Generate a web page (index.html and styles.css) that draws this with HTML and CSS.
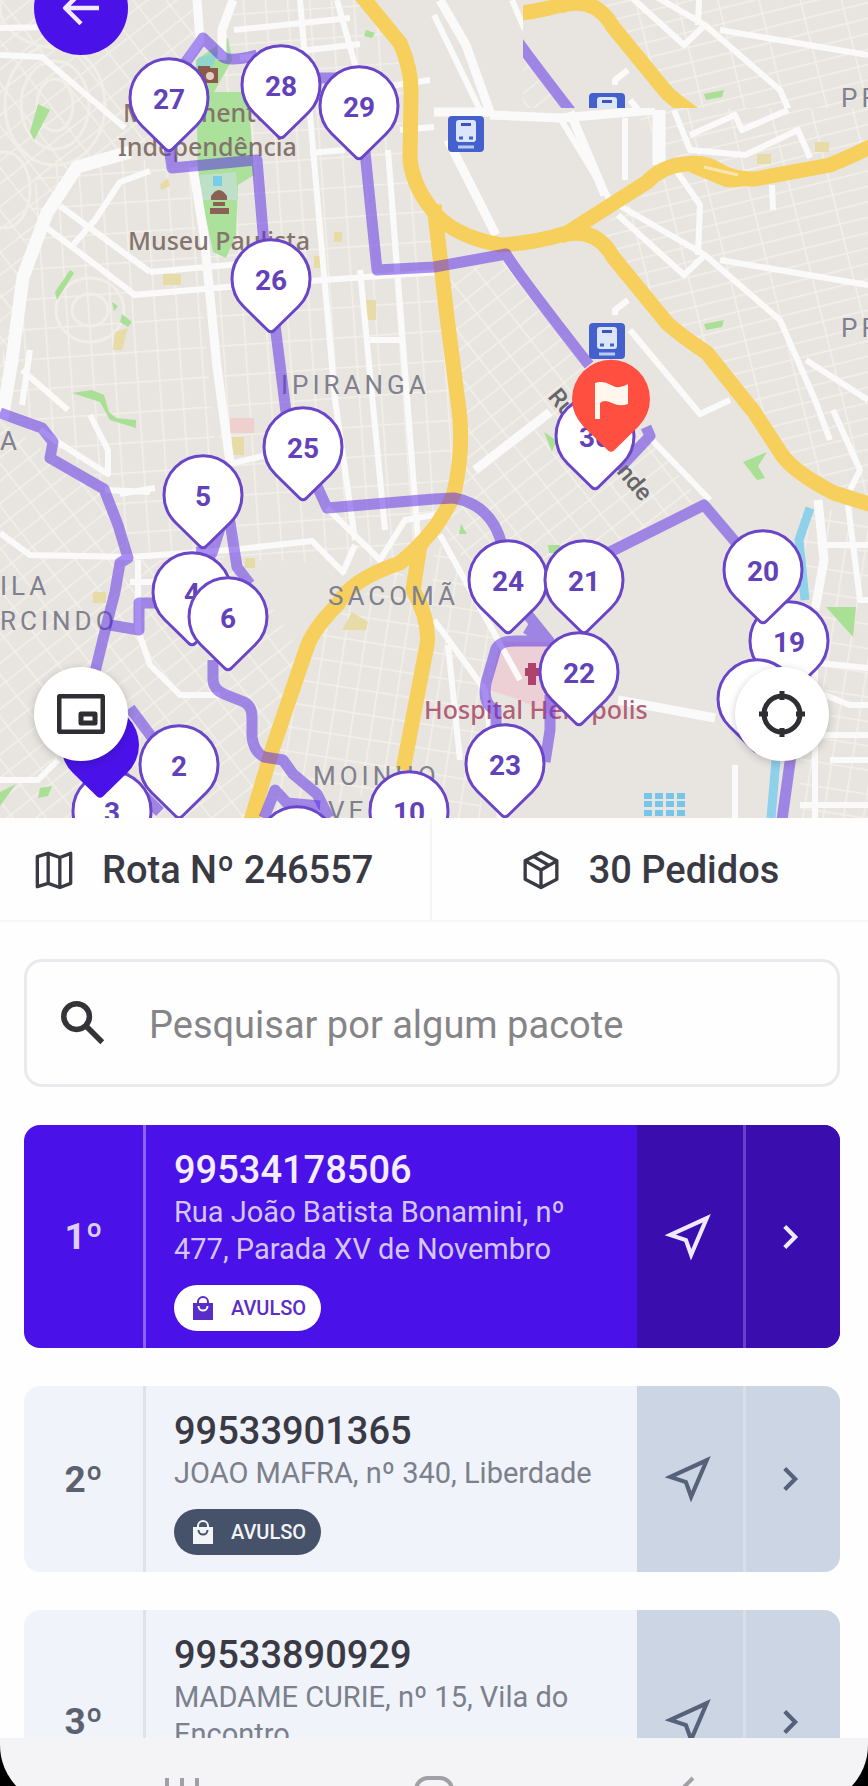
FILE: index.html
```html
<!DOCTYPE html>
<html lang="pt-BR">
<head>
<meta charset="utf-8">
<meta name="viewport" content="width=device-width, initial-scale=1">
<title>Rota Nº 246557</title>
<link rel="stylesheet" href="styles.css">
</head>
<body>
<div class="screen">
  <section class="map" aria-label="Mapa da rota">
    <svg class="map-canvas" viewBox="0 0 868 818" role="img" aria-label="Rota com 30 paradas">
      <defs>
        <pattern id="grid-a" width="22" height="30" patternUnits="userSpaceOnUse" patternTransform="rotate(-4)"><path d="M0 0H22M0 0V30" class="lane"/></pattern>
        <pattern id="grid-b" width="26" height="18" patternUnits="userSpaceOnUse" patternTransform="rotate(-38)"><path d="M0 0H26M0 0V18" class="lane"/></pattern>
        <pattern id="grid-c" width="40" height="15" patternUnits="userSpaceOnUse" patternTransform="rotate(-14)"><path d="M0 0H40M0 0V15" class="lane"/></pattern>
        <pattern id="grid-d" width="20" height="24" patternUnits="userSpaceOnUse" patternTransform="rotate(9)"><path d="M0 0H20M0 0V24" class="lane"/></pattern>
        <path id="pin" d="M-27.5 27.5A39 39 0 1 1 27.5 27.5L3 51.5Q0 54 -3 51.5Z"/>
        <clipPath id="tile"><rect x="523" y="0" width="345" height="108"/></clipPath>
        <g id="station"><rect x="-18" y="-18" width="36" height="36" rx="4" fill="#4460cc"/><rect x="-10" y="-14" width="20" height="22" rx="3" fill="#dbe6fb"/><rect x="-5" y="-11" width="10" height="3" fill="#3d55bb"/><path d="M-7 4h4M3 4h4" stroke="#4460cc" stroke-width="3"/><path d="M-8 13H8" stroke="#b9cbf5" stroke-width="3"/></g>
      </defs>

      <g id="base">
        <rect width="868" height="818" fill="#e8e5e0"/>
        <path d="M230 0H362L410 80V170L441 230L461 410L454 493L400 563L230 560L200 200Z" fill="url(#grid-a)"/>
        <path d="M40 160L190 160L225 560L130 560L100 480L0 410V370Z" fill="url(#grid-a)"/>
        <path d="M0 0H195V150L110 150L50 200L0 400Z" fill="url(#grid-b)"/>
        <path d="M0 420L100 490L130 560L240 560L300 650L250 818H0Z" fill="url(#grid-b)"/>
        <path d="M310 640L400 565L428 640L403 780L300 818H256Z" fill="url(#grid-d)"/>
        <path d="M447 270L510 262L600 380L700 500L500 600L440 530L462 450Z" fill="url(#grid-b)"/>
        <path d="M590 235L690 160L868 170V500L790 460L667 320Z" fill="url(#grid-c)"/>
        <path d="M620 0H868V150L730 175L680 160L640 120Z" fill="url(#grid-c)"/>
        <path d="M800 510H868V818H800Z" fill="url(#grid-d)"/>
        <path d="M434 540L500 600L480 818H405L430 640Z" fill="url(#grid-d)"/>
        <g class="rings">
          <ellipse cx="55" cy="105" rx="18" ry="26"/><ellipse cx="55" cy="105" rx="34" ry="44"/><ellipse cx="55" cy="105" rx="50" ry="60"/>
          <ellipse cx="90" cy="310" rx="18" ry="16"/><ellipse cx="90" cy="310" rx="34" ry="32"/><ellipse cx="60" cy="8" rx="60" ry="40"/><ellipse cx="5" cy="190" rx="25" ry="38"/>
        </g>

        <path d="M196 60L228 38L232 60L214 92H248L254 175L238 185L236 235L226 258L213 252L198 180Z" fill="#abe19a"/>
        <path d="M200 175L236 172L238 200H202Z" fill="#bfe0c8"/>
        <path d="M198 58L218 52L212 68H196Z" fill="#8fd6cf"/>
        <g fill="#a9e096">
          <path d="M38 104L50 110L34 140L30 132Z"/><path d="M366 30L375 33L372 38L364 36Z"/><path d="M70 270L74 273L57 300L55 292Z"/><path d="M112 302L118 306L114 311ZM122 314L132 322L128 327L120 322Z"/>
          <path d="M72 393L92 390L104 395L109 412L116 418L136 420L136 428L110 420L100 402Z"/><path d="M704 324L724 320L722 327L706 330Z"/><path d="M743 462L767 452L758 466L765 478L757 480Z"/><path d="M826 607H856L853 637Z"/><path d="M0 792L16 784L0 806ZM40 788L52 786L48 796L38 798Z"/><path d="M544 432L556 440L552 452ZM548 545H560V553H549ZM461 524L467 534H459Z"/>
        </g>
        <g fill="#e7dba6"><rect x="163" y="274" width="18" height="11"/><path d="M160 184L168 178L170 186L161 190Z"/><rect x="314" y="256" width="9" height="12"/><rect x="364" y="300" width="12" height="20"/><path d="M115 332L128 328L122 350H113Z"/><path d="M352 612L368 622L366 630H342Z"/><rect x="93" y="592" width="13" height="11"/><rect x="245" y="558" width="10" height="10"/><rect x="232" y="437" width="12" height="18"/><rect x="334" y="232" width="8" height="10"/><rect x="757" y="154" width="14" height="10"/><rect x="815" y="142" width="14" height="10"/></g>
        <rect x="230" y="418" width="24" height="15" fill="#f0cfcf"/>
        <path d="M500 642H548L560 720L520 700L490 690Z" fill="#ecd0d6"/>
        <path d="M213 176H222V186H213Z" fill="#7bcce8"/>

        <g class="road thin">
          <path d="M0 28L110 26M0 55L42 57L125 128"/><path d="M234 30L350 18M240 58L360 44"/><path d="M300 0L335 400L355 540M337 0L362 90L430 80"/>
          <path d="M388 150L418 540M360 270L385 530"/><path d="M150 272L240 264M60 206L150 272M47 228L135 295L250 285L440 272"/><path d="M150 171L120 182L95 220L72 246"/>
          <path d="M225 465L280 452M105 490L150 492M120 494L155 488M0 533L30 555L130 557L230 550L312 541L345 574"/><path d="M40 430L70 450L108 474V450L90 415"/><path d="M138 560V630L150 665L180 695H220M130 582H155"/>
          <path d="M0 780H38L58 760M22 405L30 350M22 370L68 410"/><path d="M327 508L380 560L405 520L434 515M355 545L344 570"/>
          <path d="M310 153L345 150M440 535L520 680M434 620L485 690L500 818M448 645L460 760M400 130L434 127"/>
          <path d="M560 118L610 200L705 255L684 275L618 215M625 118V180M676 170L700 205L698 255M705 255L780 320L815 400L830 440M720 260L868 285M806 360L868 400"/>
          <path d="M615 315L615 310L628 300M630 330L700 414L730 400M652 440L710 500M674 110L690 150L745 155L798 130L810 158M690 135L735 115L742 130L788 110"/>
          <path d="M772 185L773 210M833 410L860 470L850 490M848 505L860 600H868M825 545H868M815 620V818M790 660L868 668M810 735H868M830 760H868M735 765V818"/><path d="M434 15L480 110M512 0L525 30M370 340H400"/>
          <path d="M812 690L850 705H868M790 700L812 715M800 805H868"/>
        </g>
        <g class="road">
          <path d="M197 0L200 40L187 60M233 0L222 30V60M193 167L204 235L217 367L230 463"/><path d="M440 0L466 45L490 112L434 112M490 115L560 118L655 110"/><path class="wide" d="M659 110V165"/><path d="M570 112L605 195M448 140L496 235M475 470L550 412"/><path d="M618 700L715 718M818 500L824 560L815 610"/>
        </g>
        <path class="road wide" d="M130 152L77 167L47 213L23 277L12 360L2 420"/>

        <path d="M810 508L799 540L805 600M776 760L771 818" fill="none" stroke="#8fd0ea" stroke-width="9"/>
        <path d="M644 796H688M644 804H688M644 813H688" stroke="#78c5ec" stroke-width="6" stroke-dasharray="8 3"/>

        <g class="highway">
          <path d="M360 -6L400 43Q412 70 411 95L410 160Q413 185 430 207Q450 236 501 245Q535 243 567 233L647 182Q662 166 685 164Q705 161 718 170T755 179L830 165Q848 158 872 146"/>
          <path d="M434 205L447 317L459 410Q464 450 454 493Q440 530 400 563Q350 580 338 604Q312 630 306 650L273 747L250 824"/>
          <path d="M420 545L413 590Q430 620 427 645L403 770"/>
          <path d="M560 236Q595 225 613 257L667 323Q680 335 707 353L754 412L782 455Q795 473 834 493L872 505"/>
          <path class="ramp" d="M690 168L726 183Q740 185 760 178"/>
        </g>
        <path d="M704 167L738 175" stroke="#fbe7ae" stroke-width="3"/>

        <g class="place">
          <text x="123" y="122">Monumento à</text>
          <text x="118" y="156">Independência</text>
          <text x="128" y="250">Museu Paulista</text>
        </g>
        <path d="M198 66H210V83H198ZM205 68H218V83H204Z" fill="#8a5a4a"/><circle cx="210" cy="76" r="4" fill="#e5cfc2"/>
        <path d="M211 196Q219 184 227 196V200H211ZM213 202H225V206H213ZM210 208H229V214H210Z" fill="#8a6255"/>
        <g class="district">
          <text x="281" y="394">IPIRANGA</text>
          <text x="328" y="605">SACOMÃ</text>
          <text x="0" y="595">ILA</text>
          <text x="0" y="630">RCINDO</text>
          <text x="0" y="450">A</text>
          <text x="313" y="785">MOINHO</text>
          <text x="328" y="820">VELHO</text>
          <text x="841" y="337">PR</text>
        </g>
        <path d="M532 663V685M525 672H540" stroke="#b0436c" stroke-width="8"/>
        <text class="hospital" x="424" y="719">Hospital Heliópolis</text>
        <use href="#station" x="466" y="134"/>
        <use href="#station" x="607" y="341"/>
        <g class="route">
          <path d="M0 413L42 428L53 442L50 458L104 489L118 525L128 558L120 563L115 592L107 623L95 672"/>
          <path d="M110 625L139 630V603H156M196 552L212 553L222 522H230L237 567L250 584"/>
          <path d="M213 660V680Q214 690 224 694L244 702Q252 706 252 717V737Q254 752 264 757L283 760L293 774L317 794L329 818"/>
          <path d="M264 818L275 790L287 803L320 806M130 708L154 740M124 776L160 812"/>
          <path d="M183 66L203 38L223 57Q230 62 257 55M316 78H340M168 140L172 168L257 160L264 244M275 325L286 412"/>
          <path d="M365 152L377 270L434 267L506 254Q515 270 589 365"/>
          <path d="M316 484L327 508L434 499L454 498Q492 505 502 545M528 615L549 641H515Q497 641 495 652L486 683Q482 705 496 710V730M526 628L545 640M550 695V730L545 762"/>
          <path d="M608 553L704 505L738 545M791 755L782 820M646 427L650 436L618 470"/>
        </g>
      </g>
      <g clip-path="url(#tile)"><use href="#base" transform="translate(0 -230)"/></g>

      <g class="street"><text transform="translate(547 397) rotate(50)">Rua</text><text transform="translate(616 472) rotate(50)">nde</text></g>

      <g class="pins">
        <g transform="translate(169 98)"><use href="#pin"/><text y="11">27</text></g>
        <g transform="translate(281 85)"><use href="#pin"/><text y="11">28</text></g>
        <g transform="translate(359 106)"><use href="#pin"/><text y="11">29</text></g>
        <g transform="translate(271 279)"><use href="#pin"/><text y="11">26</text></g>
        <g transform="translate(303 447)"><use href="#pin"/><text y="11">25</text></g>
        <g transform="translate(203 495)"><use href="#pin"/><text y="11">5</text></g>
        <g transform="translate(192 592)"><use href="#pin"/><text y="11">4</text></g>
        <g transform="translate(228 617)"><use href="#pin"/><text y="11">6</text></g>
        <g transform="translate(112 811)"><use href="#pin"/><text y="11">3</text></g>
        <g transform="translate(179 765)"><use href="#pin"/><text y="11">2</text></g>
        <g transform="translate(297 846)"><use href="#pin"/></g>
        <g transform="translate(409 811)"><use href="#pin"/><text y="11">10</text></g>
        <g transform="translate(508 580)"><use href="#pin"/><text y="11">24</text></g>
        <g transform="translate(584 580)"><use href="#pin"/><text y="11">21</text></g>
        <g transform="translate(579 672)"><use href="#pin"/><text y="11">22</text></g>
        <g transform="translate(505 764)"><use href="#pin"/><text y="11">23</text></g>
        <g transform="translate(789 641)"><use href="#pin"/><text y="11">19</text></g>
        <g transform="translate(763 570)"><use href="#pin"/><text y="11">20</text></g>
        <g transform="translate(757 699)"><use href="#pin"/></g>
        <g transform="translate(595 436)"><use href="#pin"/><text y="11">30</text></g>
      </g>
      <use href="#pin" x="100" y="745" fill="#4a12e8"/>
      <g transform="translate(611 399)"><use href="#pin" fill="#ff4f40"/><path d="M-16 -16Q-8 -19 0 -14T17 -15V5Q9 8 1 4T-11 4V20H-16Z" fill="#fff6ee"/></g>
    </svg>
    <button class="map-button back" aria-label="Voltar"><svg viewBox="0 0 24 24"><path d="M20 12H5M12 5L5 12L12 19"/></svg></button>
    <button class="map-button minimize" aria-label="Miniatura"><svg viewBox="0 0 48 40"><rect x="2" y="2" width="44" height="36" rx="2"/><rect x="24" y="20" width="14" height="9"/></svg></button>
    <button class="map-button locate" aria-label="Centralizar"><svg viewBox="0 0 48 48"><circle cx="24" cy="24" r="18"/><path d="M24 1V10M24 38V47M1 24H10M38 24H47"/></svg></button>
  </section>

  <header class="summary">
    <div class="summary-item">
      <svg class="summary-icon" viewBox="0 0 24 24"><path d="M2 4L8.500 2V20L2 22ZM8.500 2L15.500 4.500V22.500L8.500 20M15.500 4.500L22 2V20L15.500 22.500" /></svg>
      <span>Rota Nº 246557</span>
    </div>
    <div class="summary-item">
      <svg class="summary-icon" viewBox="0 0 24 24"><path d="M12 1.500L21.500 6.500V17.500L12 22.500L2.500 17.500V6.500ZM2.500 6.500L12 12L21.500 6.500M12 12V22.500M7.500 4L17 9.300"/></svg>
      <span>30 Pedidos</span>
    </div>
  </header>

  <main class="content">
    <label class="search">
      <svg class="search-icon" viewBox="0 0 24 24" aria-hidden="true"><circle cx="8.500" cy="8.500" r="7"/><path d="M13.500 13.500L22.500 22.500"/></svg>
      <input type="search" aria-label="Pesquisar por algum pacote" placeholder="Pesquisar por algum pacote">
    </label>

    <article class="card active">
      <div class="order">1º</div>
      <div class="info">
        <h2>99534178506</h2>
        <p>Rua João Batista Bonamini, nº 477, Parada XV de Novembro</p>
        <span class="badge"><svg viewBox="0 0 24 24"><path class="bag" d="M2 7H22V24H2Z"/><path class="handle" d="M7 8V6A5 5 0 0 1 17 6V8"/><path class="fold" d="M7.500 10A4.500 4.500 0 0 0 16.500 10"/></svg>AVULSO</span>
      </div>
      <button class="action" aria-label="Navegar"><svg viewBox="0 0 24 24"><path d="M3.500 11L21 3L13.500 20.500L11 13.500Z"/></svg></button>
      <button class="action more" aria-label="Abrir"><svg viewBox="0 0 24 24"><path d="M9 7L14 12L9 17"/></svg></button>
    </article>

    <article class="card">
      <div class="order">2º</div>
      <div class="info">
        <h2>99533901365</h2>
        <p>JOAO MAFRA, nº 340, Liberdade</p>
        <span class="badge"><svg viewBox="0 0 24 24"><path class="bag" d="M2 7H22V24H2Z"/><path class="handle" d="M7 8V6A5 5 0 0 1 17 6V8"/><path class="fold" d="M7.500 10A4.500 4.500 0 0 0 16.500 10"/></svg>AVULSO</span>
      </div>
      <button class="action" aria-label="Navegar"><svg viewBox="0 0 24 24"><path d="M3.500 11L21 3L13.500 20.500L11 13.500Z"/></svg></button>
      <button class="action more" aria-label="Abrir"><svg viewBox="0 0 24 24"><path d="M9 7L14 12L9 17"/></svg></button>
    </article>

    <article class="card">
      <div class="order">3º</div>
      <div class="info">
        <h2>99533890929</h2>
        <p>MADAME CURIE, nº 15, Vila do Encontro</p>
        <span class="badge"><svg viewBox="0 0 24 24"><path class="bag" d="M2 7H22V24H2Z"/><path class="handle" d="M7 8V6A5 5 0 0 1 17 6V8"/><path class="fold" d="M7.500 10A4.500 4.500 0 0 0 16.500 10"/></svg>AVULSO</span>
      </div>
      <button class="action" aria-label="Navegar"><svg viewBox="0 0 24 24"><path d="M3.500 11L21 3L13.500 20.500L11 13.500Z"/></svg></button>
      <button class="action more" aria-label="Abrir"><svg viewBox="0 0 24 24"><path d="M9 7L14 12L9 17"/></svg></button>
    </article>
  </main>

  <nav class="system-bar" aria-label="Sistema">
    <div class="system-keys">
      <button aria-label="Recentes"><svg viewBox="0 0 40 40"><path d="M4 2V36M19 2V36M34 2V36"/></svg></button>
      <button aria-label="Início"><svg viewBox="0 0 40 40"><rect x="2" y="2" width="36" height="36" rx="12"/></svg></button>
      <button aria-label="Voltar"><svg viewBox="0 0 40 40"><path d="M28 2L10 20L28 38"/></svg></button>
    </div>
  </nav>
</div>
</body>
</html>
```

FILE: styles.css
```css
* { box-sizing: border-box; }

body {
  margin: 0;
  background: #000;
  font-family: Roboto, "Liberation Sans", sans-serif;
  color: #3a3a44;
}

button {
  border: 0;
  padding: 0;
  background: none;
  color: inherit;
  font: inherit;
}

svg { fill: none; stroke-linejoin: round; }

.screen {
  display: flex;
  flex-direction: column;
  height: 100vh;
  background: #fefefe;
}

/* Map */
.map { position: relative; flex: none; overflow: hidden; }
.map-canvas { display: block; width: 100%; height: auto; }
.lane { stroke: #f3f0e9; stroke-width: 3; }
.rings { stroke: #f1eee8; stroke-width: 3; }
.road { stroke: #fbfafa; stroke-width: 9; }
.road.thin { stroke-width: 6; }
.road.wide, .road .wide { stroke-width: 13; }
.highway { stroke: #f6cf5c; stroke-width: 15; }
.highway .ramp { stroke-width: 8; }
.route { stroke: #5a2be6; stroke-opacity: .52; stroke-width: 11; }
.place { font: 500 25px "Noto Sans", sans-serif; fill: #85736d; }
.district { font: 400 26px Roboto, sans-serif; letter-spacing: 4px; fill: #80808e; }
.hospital { font: 500 25px "Noto Sans", sans-serif; fill: #b06078; }
.street { font: 500 24px Roboto, sans-serif; fill: #66666a; }
.pins use { fill: #fff; stroke: #6a45c8; stroke-width: 3; }
.pins text { font: 700 28px Roboto, sans-serif; fill: #6242b8; text-anchor: middle; }

.map-button {
  position: absolute;
  display: grid;
  place-items: center;
  width: 94px;
  height: 94px;
  border-radius: 50%;
  background: #fff;
  color: #2e2e33;
  box-shadow: 0 2px 8px rgba(0, 0, 0, .2);
}
.map-button svg { width: 48px; stroke: currentColor; stroke-width: 5; }
.map-button.back { top: -39px; left: 34px; background: #4a12e8; color: #f1eaff; box-shadow: none; }
.map-button.back svg { width: 54px; stroke-width: 2; }
.map-button.minimize { bottom: 57px; left: 34px; }
.map-button.locate { right: 39px; bottom: 57px; }

/* Summary */
.summary {
  display: grid;
  flex: none;
  grid-template-columns: 430fr 438fr;
  border-bottom: 2px solid #f8f8fa;
}
.summary-item {
  display: flex;
  align-items: center;
  gap: 28px;
  padding: 28px 34px 26px;
  font-size: 38px;
  font-weight: 500;
  line-height: 48px;
}
.summary-item + .summary-item { justify-content: center; border-left: 2px solid #f5f5f8; }
.summary-icon { width: 40px; height: 40px; stroke: currentColor; stroke-width: 2; }

/* List */
.content {
  display: flex;
  flex: 1;
  flex-direction: column;
  gap: 38px;
  min-height: 0;
  padding: 37px 28px 0 24px;
  overflow: hidden;
}
.search {
  display: flex;
  flex: none;
  align-items: center;
  height: 128px;
  padding: 0 34px;
  border: 3px solid #e9eaef;
  border-radius: 18px;
}
.search-icon { flex: none; width: 44px; margin-right: 44px; stroke: #333338; stroke-width: 3; }
.search input {
  flex: 1;
  min-width: 0;
  padding: 4px 0 0;
  border: 0;
  outline: 0;
  background: none;
  color: #333338;
  font: 400 38px Roboto, sans-serif;
}
.search input::placeholder { color: #858588; opacity: 1; }

.card {
  display: grid;
  flex: none;
  grid-template-columns: 122px 1fr 106px 97px;
  border-radius: 16px;
  overflow: hidden;
  background: #f0f3f9;
  color: #5c6170;
}
.order {
  display: grid;
  place-items: center;
  border-right: 3px solid #dfe2e9;
  font-size: 37px;
  font-weight: 700;
}
.info { padding: 21px 24px 17px 28px; }
.info h2 { margin: 0; color: #3a3a46; font-size: 38px; font-weight: 500; line-height: 48px; }
.info p { margin: 0 0 17px; color: #7b808c; font-size: 29px; line-height: 37px; }
.badge {
  display: inline-flex;
  align-items: center;
  gap: 16px;
  height: 46px;
  padding: 0 15px 0 17px;
  border-radius: 23px;
  background: #46516a;
  color: #f2f4f8;
  font-size: 20px;
  font-weight: 500;
  vertical-align: top;
}
.badge svg { width: 24px; stroke-width: 2; }
.badge .bag { fill: currentColor; }
.badge .handle { stroke: currentColor; }
.badge .fold { stroke: #46516a; }
.action { display: grid; place-items: center; padding-right: 4px; background: #ccd5e3; color: #56617a; }
.action.more { border-left: 3px solid #d7dfeb; }
.action svg { width: 50px; stroke: currentColor; stroke-width: 2; stroke-linejoin: miter; }

.card.active { background: #4a12e8; color: #dccfff; }
.active .order { border-color: #8a62f5; }
.active h2 { color: #f3edff; }
.active p { color: #d5c6ff; }
.active .badge { background: #fff; color: #5a2cc8; }
.active .badge .fold { stroke: #fff; }
.active .action { background: #390dae; color: #f0eaff; }
.active .action.more { border-color: #6a3fca; }

/* System bar */
.system-bar { flex: none; height: 48px; overflow: hidden; background: #000; }
.system-keys {
  display: flex;
  justify-content: space-around;
  height: 67px;
  padding: 38px 58px 0;
  border-radius: 0 0 60px 60px;
  background: #f4f4f7;
}
.system-keys svg { display: block; width: 40px; stroke: #a0a0a6; stroke-width: 4; }
```
